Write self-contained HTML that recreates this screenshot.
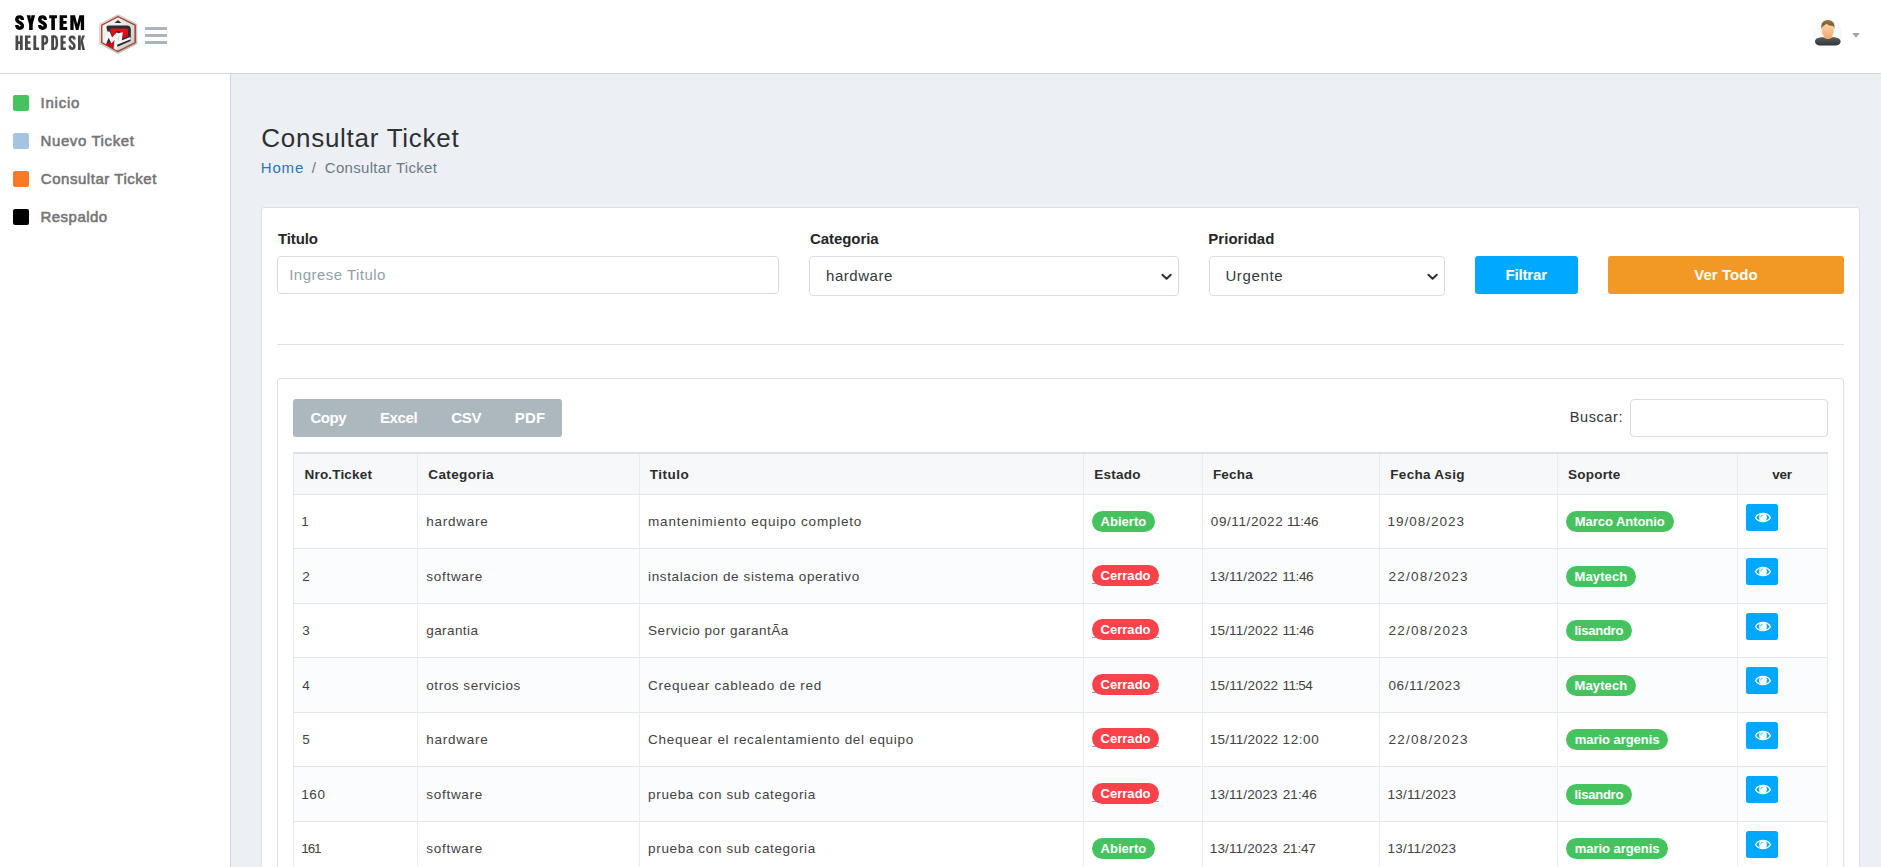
<!DOCTYPE html>
<html lang="es">
<head>
<meta charset="utf-8">
<title>Consultar Ticket</title>
<style>
*{box-sizing:border-box;margin:0;padding:0}
html,body{width:1881px;height:867px;overflow:hidden}
body{font-family:"Liberation Sans",sans-serif;background:#eceff4;color:#343434;font-size:15px;position:relative}
.abs{position:absolute}
.t{position:absolute;white-space:nowrap;line-height:1}
/* header */
#hdr{position:absolute;left:0;top:0;width:1881px;height:74px;background:#fff;border-bottom:1px solid #d0d6db}
/* sidebar */
#side{position:absolute;left:0;top:74px;width:231px;height:793px;background:#fff;border-right:1px solid #d0d6db}
.sq{position:absolute;left:13px;width:16px;height:16px;border-radius:2px}
.mi{position:absolute;left:41px;font-weight:bold;font-size:15px;color:#6f6f6f;white-space:nowrap;line-height:1}
/* main */
#card{position:absolute;left:261px;top:207px;width:1599px;height:700px;background:#fff;border:1px solid #dbe2e7;border-radius:3px}
.lbl{font-weight:bold;font-size:15px;color:#2b2b2b}
.inp{position:absolute;background:#fff;border:1px solid #d5dde2;border-radius:4px}
.btn{position:absolute;border-radius:3px;color:#fff;font-weight:bold;font-size:15px;text-align:center}
#hr{position:absolute;left:277px;top:344px;width:1567px;height:1px;background:#dfe2e5}
#card2{position:absolute;left:277px;top:378px;width:1567px;height:520px;background:#fff;border:1px solid #dde1e4;border-radius:3px}
/* table */
#tbl{position:absolute;left:293px;top:452px;width:1535px;border-collapse:collapse;table-layout:fixed;font-size:15px}
#tbl th,#tbl td{border:1px solid #dde3e7;text-align:left;vertical-align:middle;white-space:nowrap;overflow:hidden}
#tbl th{height:41px;background:#f6f8fa;font-weight:bold;color:#2b2b2b;padding:0 0 0 10px;border-top:2px solid #d8e2e7}
#tbl td{height:54.5px;padding:0 0 0 8px;color:#3c3c3c}
#tbl tr.e td{background:#fbfcfd}
.bd{display:inline-block;height:20px;line-height:20px;border-radius:10px;color:#fff;font-weight:bold;font-size:13px;padding:0 8px;vertical-align:middle}
.g{background:#46c35f}
.r{background:#fa424a}
.eye{position:absolute;width:32px;height:27px;background:#00a8ff;border-radius:2.5px}
.eye svg{position:absolute;left:8.5px;top:8.5px;width:16px;height:10px}
</style>
</head>
<body>
<div id="hdr">
<svg class="abs" style="left:0;top:0" width="200" height="73" viewBox="0 0 200 73">
<defs>
<linearGradient id="lg1" x1="0" y1="0" x2="1" y2="1"><stop offset="0" stop-color="#ffffff"/><stop offset="1" stop-color="#c9c9c9"/></linearGradient>
<linearGradient id="lg2" x1="0" y1="0" x2="0" y2="1"><stop offset="0" stop-color="#f0101c"/><stop offset="1" stop-color="#c00c14"/></linearGradient>
<linearGradient id="lg3" x1="0" y1="0" x2="1" y2="1"><stop offset="0" stop-color="#f4f4f4"/><stop offset="1" stop-color="#b8b8b8"/></linearGradient>
<filter id="bl" x="-20%" y="-20%" width="140%" height="140%"><feGaussianBlur stdDeviation="0.7"/></filter>
<filter id="bl3" x="-20%" y="-20%" width="140%" height="140%"><feGaussianBlur stdDeviation="0.5"/></filter>
<filter id="bl2" x="-20%" y="-20%" width="140%" height="140%"><feGaussianBlur stdDeviation="0.35"/></filter>
</defs>
<g fill="#000" filter="url(#bl2)">
<path d="M22.4 19.9 C22.4 17.8 21.4 16.9 19.6 16.9 C17.8 16.9 16.8 17.9 16.8 19.5 C16.8 22.6 22.4 22.6 22.4 25.8 C22.4 27.4 21.4 28.2 19.6 28.2 C17.8 28.2 16.8 27.3 16.8 25.1" fill="none" stroke="#000" stroke-width="3.4"/>
<path d="M26.7 15.2 H30.4 L30.9 19.5 L31.4 15.2 H35.1 L32.7 24.2 V29.9 H29.1 V24.2 Z"/>
<path d="M45.3 19.9 C45.3 17.8 44.3 16.9 42.5 16.9 C40.7 16.9 39.7 17.9 39.7 19.5 C39.7 22.6 45.3 22.6 45.3 25.8 C45.3 27.4 44.3 28.2 42.5 28.2 C40.7 28.2 39.7 27.3 39.7 25.1" fill="none" stroke="#000" stroke-width="3.4"/>
<path d="M49.2 15.2 H57 V18.3 H54.9 V29.9 H51.3 V18.3 H49.2 Z"/>
<path d="M59.6 15.2 H67 V18.1 H63.3 V21 H66.6 V23.8 H63.3 V27 H67.2 V29.9 H59.6 Z"/>
<path d="M70.3 15.2 H75 L77.2 24 L79.4 15.2 H84.1 V29.9 H80.8 V20.5 L78.5 29.9 H75.9 L73.6 20.5 V29.9 H70.3 Z"/>
</g>
<g fill="#4a4a4c" filter="url(#bl2)">
<path d="M15.5 35.4 H18.3 V41.3 H19.9 V35.4 H22.7 V50 H19.9 V43.9 H18.3 V50 H15.5 Z"/>
<path d="M25 35.4 H30.6 V37.8 H27.8 V41.3 H30.3 V43.7 H27.8 V47.6 H30.8 V50 H25 Z"/>
<path d="M33.4 35.4 H36.2 V47.6 H39.1 V50 H33.4 Z"/>
<path d="M41.4 35.4 H44.2 V50 H41.4 Z"/>
<path d="M43 36.6 H44.8 C46.5 36.6 47 37.6 47 40 C47 42.4 46.5 43.5 44.8 43.5 H43" fill="none" stroke="#4a4a4c" stroke-width="2.5"/>
<path d="M51.2 35.4 H54 V50 H51.2 Z"/>
<path d="M52.8 36.6 H54.5 C56.4 36.6 56.9 38 56.9 42.7 C56.9 47.4 56.4 48.8 54.5 48.8 H52.8" fill="none" stroke="#4a4a4c" stroke-width="2.5"/>
<path d="M60.5 35.4 H65.8 V37.8 H63.3 V41.3 H65.6 V43.7 H63.3 V47.6 H65.9 V50 H60.5 Z"/>
<path d="M74.4 39.6 C74.4 37.6 73.6 36.7 72.1 36.7 C70.6 36.7 69.8 37.6 69.8 39.2 C69.8 42.4 74.4 42.6 74.4 46 C74.4 47.8 73.6 48.7 72.1 48.7 C70.6 48.7 69.8 47.8 69.8 45.6" fill="none" stroke="#4a4a4c" stroke-width="2.6"/>
<path d="M78 35.4 H80.8 V50 H78 Z"/>
<path d="M82.2 35.4 H85 L80.8 45.6 V40 Z"/>
<path d="M80.9 42.6 L82.7 40.2 L85 50 H82.2 Z"/>
</g>
<!-- hex logo -->
<polygon points="118,14.3 137.3,23.9 137.3,43.9 118,53.9 99.3,43.9 99.3,23.9" fill="#bdbdbd" filter="url(#bl)"/>
<polygon points="118,14.9 136.8,24.2 136.8,43.6 118,53.3 99.8,43.6 99.8,24.2" fill="url(#lg3)"/>
<polygon points="118,16.7 135.2,25.2 135.2,42.6 118,51.3 101.7,42.6 101.7,25.2" fill="none" stroke="#ad4836" stroke-width="1.5" filter="url(#bl3)"/>
<polygon points="118,18 134,26 134,41.9 118,49.9 102.9,41.9 102.9,26" fill="url(#lg1)"/>
<path d="M106.4 27.6 Q106.4 25.6 108.6 25.6 H127 Q130.8 25.8 130.8 29.4 V37.8 L121.6 41.2 H110 Z" fill="#2d2d2f"/>
<path d="M110 28.4 H126.4 Q128 28.6 128 30.4 V36.4 L121.6 38.8 H112.6 Z" fill="url(#lg2)"/>
<polygon points="118,20 121.4,22.9 114.6,22.9" fill="#2d2d2f"/>
<polygon points="106,42 114.4,37.6 114.6,49.6 106,44.8" fill="#c80e16"/>
<polygon points="106.2,36.4 108.8,30.6 111.4,42 106.8,43" fill="#2d2d2f"/>
<polygon points="116,31 120,31 119,34.4 115,35.4" fill="#2d2d2f"/>
<path d="M103.8 42 L107.4 31.4 L109.6 31.6 L112.2 37.6 L116.6 32.6 L119.4 33.4 L116.8 50.2 L113.6 48.6 L114.6 40 L111.4 43.2 L108.6 37.8 L106.4 43.6 Z" fill="#f6f6f6"/>
<path d="M119.2 33 L122.8 32.2 L121.8 40.4 L130.2 37 L130.4 39.6 L118.6 44.6 L117.8 43 Z" fill="#f6f6f6"/>
<path d="M117 44.8 L130.6 39.2 L130.6 41 L117.4 46.8 Z" fill="#2d2d2f"/>
<!-- hamburger -->
<rect x="145" y="27" width="22" height="3" fill="#a9b4bc"/>
<rect x="145" y="34" width="22" height="3" fill="#a9b4bc"/>
<rect x="145" y="41" width="22" height="3" fill="#a9b4bc"/>
</svg>
<svg class="abs" style="left:1805px;top:12px" width="64" height="44" viewBox="1805 12 64 44">
<defs>
<linearGradient id="sk" x1="0" y1="0" x2="0" y2="1"><stop offset="0" stop-color="#fdd6a8"/><stop offset="1" stop-color="#f3a96e"/></linearGradient>
<linearGradient id="bd" x1="0" y1="0" x2="0" y2="1"><stop offset="0" stop-color="#5a5c5f"/><stop offset="1" stop-color="#333537"/></linearGradient>
<linearGradient id="hr2" x1="0" y1="0" x2="0" y2="1"><stop offset="0" stop-color="#957442"/><stop offset="1" stop-color="#6f5530"/></linearGradient>
<filter id="ab" x="-20%" y="-20%" width="140%" height="140%"><feGaussianBlur stdDeviation="0.45"/></filter>
</defs>
<circle cx="1827.8" cy="33.8" r="14.6" fill="#f7f9fb"/>
<g filter="url(#ab)">
<rect x="1824.2" y="34" width="7.4" height="6.4" fill="#f2a86c"/>
<path d="M1815 41.4 C1815 38.6 1818 37.3 1823.6 37.2 C1825.4 39.6 1830.4 39.6 1832.2 37.2 C1837.6 37.3 1840.6 38.6 1840.6 41.4 C1840.6 44.2 1837.6 45.6 1834 45.6 H1821.6 C1818 45.6 1815 44.2 1815 41.4 Z" fill="url(#bd)"/>
<ellipse cx="1827.8" cy="30.6" rx="6.1" ry="7.7" fill="url(#sk)"/>
<path d="M1821.6 29 C1820.4 23.6 1823 19.9 1827.8 19.9 C1832.8 19.9 1835.4 23.4 1834.2 29 C1833.8 26.8 1833 25.6 1831.6 25.8 C1829.6 26 1828 25 1826.8 23.8 C1825.4 25 1822.6 25.2 1821.6 29 Z" fill="url(#hr2)"/>
</g>
<polygon points="1852,33 1860,33 1856,37.8" fill="#9fa7af"/>
</svg>
</div>
<div id="side">
  <div class="sq" style="top:21px;background:#46c35f"></div>
  <div class="sq" style="top:59px;background:#a4c4e4"></div>
  <div class="sq" style="top:97px;background:#f97a26"></div>
  <div class="sq" style="top:135px;background:#000"></div>
</div>
<div id="card"></div>
<div class="inp" style="left:277px;top:256px;width:502px;height:38px"></div>
<div class="inp" style="left:809px;top:256px;width:370px;height:40px"></div>
<div class="inp" style="left:1209px;top:256px;width:236px;height:40px"></div>
<div class="btn" style="left:1475px;top:256px;width:103px;height:38px;background:#00a8ff"></div>
<div class="btn" style="left:1608px;top:256px;width:236px;height:38px;background:#f29824"></div>
<div id="hr"></div>
<div id="card2"></div>
<div class="abs" style="left:293px;top:399px;width:269px;height:38px;background:#adb7be;border-radius:3px"></div>
<div class="inp" style="left:1630px;top:399px;width:198px;height:38px"></div>
<div class="abs" style="left:293px;top:452px;width:1535px;height:2px;background:#dde2e6"></div>
<div class="abs" style="left:293px;top:454px;width:1535px;height:40px;background:#f6f8fa"></div>
<div class="abs" style="left:293px;top:549px;width:1535px;height:54px;background:#fbfcfd"></div>
<div class="abs" style="left:293px;top:658px;width:1535px;height:54px;background:#fbfcfd"></div>
<div class="abs" style="left:293px;top:767px;width:1535px;height:54px;background:#fbfcfd"></div>
<div class="abs" style="left:293px;top:494px;width:1535px;height:1px;background:#e1e6e9"></div>
<div class="abs" style="left:293px;top:548px;width:1535px;height:1px;background:#e1e6e9"></div>
<div class="abs" style="left:293px;top:603px;width:1535px;height:1px;background:#e1e6e9"></div>
<div class="abs" style="left:293px;top:657px;width:1535px;height:1px;background:#e1e6e9"></div>
<div class="abs" style="left:293px;top:712px;width:1535px;height:1px;background:#e1e6e9"></div>
<div class="abs" style="left:293px;top:766px;width:1535px;height:1px;background:#e1e6e9"></div>
<div class="abs" style="left:293px;top:821px;width:1535px;height:1px;background:#e1e6e9"></div>
<div class="abs" style="left:293px;top:454px;width:1px;height:420px;background:#e8ecef"></div>
<div class="abs" style="left:417px;top:454px;width:1px;height:420px;background:#e8ecef"></div>
<div class="abs" style="left:639px;top:454px;width:1px;height:420px;background:#e8ecef"></div>
<div class="abs" style="left:1083px;top:454px;width:1px;height:420px;background:#e8ecef"></div>
<div class="abs" style="left:1202px;top:454px;width:1px;height:420px;background:#e8ecef"></div>
<div class="abs" style="left:1379px;top:454px;width:1px;height:420px;background:#e8ecef"></div>
<div class="abs" style="left:1557px;top:454px;width:1px;height:420px;background:#e8ecef"></div>
<div class="abs" style="left:1737px;top:454px;width:1px;height:420px;background:#e8ecef"></div>
<div class="abs" style="left:1827px;top:454px;width:1px;height:420px;background:#e8ecef"></div>
<div class="abs" style="left:1092px;top:511px;width:63px;height:21px;border-radius:10.5px;background:#46c35f"></div>
<div class="abs" style="left:1566px;top:511px;width:108px;height:21px;border-radius:10.5px;background:#46c35f"></div>
<div class="eye" style="left:1746px;top:504px"><svg viewBox="0 0 16 10" style="overflow:visible"><path d="M0.6 4.7 C3.4 -1.0 12.6 -1.0 15.4 4.7 C12.6 9.8 3.4 9.8 0.6 4.7 Z" fill="none" stroke="#fff" stroke-width="1.3"/><circle cx="8" cy="4.5" r="3.9" fill="#fff"/><path d="M5.6 4.4 A2.4 2.4 0 0 1 7.9 2.0" stroke="#27b3ff" stroke-width="0.8" fill="none"/></svg></div>
<div class="abs" style="left:1092px;top:583px;width:67px;height:1px;background:#86a3c4"></div>
<div class="abs" style="left:1092px;top:565px;width:67px;height:21px;border-radius:10.5px;background:#fa424a"></div>
<div class="abs" style="left:1566px;top:566px;width:70px;height:21px;border-radius:10.5px;background:#46c35f"></div>
<div class="eye" style="left:1746px;top:558px"><svg viewBox="0 0 16 10" style="overflow:visible"><path d="M0.6 4.7 C3.4 -1.0 12.6 -1.0 15.4 4.7 C12.6 9.8 3.4 9.8 0.6 4.7 Z" fill="none" stroke="#fff" stroke-width="1.3"/><circle cx="8" cy="4.5" r="3.9" fill="#fff"/><path d="M5.6 4.4 A2.4 2.4 0 0 1 7.9 2.0" stroke="#27b3ff" stroke-width="0.8" fill="none"/></svg></div>
<div class="abs" style="left:1092px;top:637px;width:67px;height:1px;background:#86a3c4"></div>
<div class="abs" style="left:1092px;top:619px;width:67px;height:21px;border-radius:10.5px;background:#fa424a"></div>
<div class="abs" style="left:1566px;top:620px;width:66px;height:21px;border-radius:10.5px;background:#46c35f"></div>
<div class="eye" style="left:1746px;top:613px"><svg viewBox="0 0 16 10" style="overflow:visible"><path d="M0.6 4.7 C3.4 -1.0 12.6 -1.0 15.4 4.7 C12.6 9.8 3.4 9.8 0.6 4.7 Z" fill="none" stroke="#fff" stroke-width="1.3"/><circle cx="8" cy="4.5" r="3.9" fill="#fff"/><path d="M5.6 4.4 A2.4 2.4 0 0 1 7.9 2.0" stroke="#27b3ff" stroke-width="0.8" fill="none"/></svg></div>
<div class="abs" style="left:1092px;top:692px;width:67px;height:1px;background:#86a3c4"></div>
<div class="abs" style="left:1092px;top:674px;width:67px;height:21px;border-radius:10.5px;background:#fa424a"></div>
<div class="abs" style="left:1566px;top:675px;width:70px;height:21px;border-radius:10.5px;background:#46c35f"></div>
<div class="eye" style="left:1746px;top:667px"><svg viewBox="0 0 16 10" style="overflow:visible"><path d="M0.6 4.7 C3.4 -1.0 12.6 -1.0 15.4 4.7 C12.6 9.8 3.4 9.8 0.6 4.7 Z" fill="none" stroke="#fff" stroke-width="1.3"/><circle cx="8" cy="4.5" r="3.9" fill="#fff"/><path d="M5.6 4.4 A2.4 2.4 0 0 1 7.9 2.0" stroke="#27b3ff" stroke-width="0.8" fill="none"/></svg></div>
<div class="abs" style="left:1092px;top:746px;width:67px;height:1px;background:#86a3c4"></div>
<div class="abs" style="left:1092px;top:728px;width:67px;height:21px;border-radius:10.5px;background:#fa424a"></div>
<div class="abs" style="left:1566px;top:729px;width:102px;height:21px;border-radius:10.5px;background:#46c35f"></div>
<div class="eye" style="left:1746px;top:722px"><svg viewBox="0 0 16 10" style="overflow:visible"><path d="M0.6 4.7 C3.4 -1.0 12.6 -1.0 15.4 4.7 C12.6 9.8 3.4 9.8 0.6 4.7 Z" fill="none" stroke="#fff" stroke-width="1.3"/><circle cx="8" cy="4.5" r="3.9" fill="#fff"/><path d="M5.6 4.4 A2.4 2.4 0 0 1 7.9 2.0" stroke="#27b3ff" stroke-width="0.8" fill="none"/></svg></div>
<div class="abs" style="left:1092px;top:801px;width:67px;height:1px;background:#86a3c4"></div>
<div class="abs" style="left:1092px;top:783px;width:67px;height:21px;border-radius:10.5px;background:#fa424a"></div>
<div class="abs" style="left:1566px;top:784px;width:66px;height:21px;border-radius:10.5px;background:#46c35f"></div>
<div class="eye" style="left:1746px;top:776px"><svg viewBox="0 0 16 10" style="overflow:visible"><path d="M0.6 4.7 C3.4 -1.0 12.6 -1.0 15.4 4.7 C12.6 9.8 3.4 9.8 0.6 4.7 Z" fill="none" stroke="#fff" stroke-width="1.3"/><circle cx="8" cy="4.5" r="3.9" fill="#fff"/><path d="M5.6 4.4 A2.4 2.4 0 0 1 7.9 2.0" stroke="#27b3ff" stroke-width="0.8" fill="none"/></svg></div>
<div class="abs" style="left:1092px;top:838px;width:63px;height:21px;border-radius:10.5px;background:#46c35f"></div>
<div class="abs" style="left:1566px;top:838px;width:102px;height:21px;border-radius:10.5px;background:#46c35f"></div>
<div class="eye" style="left:1746px;top:831px"><svg viewBox="0 0 16 10" style="overflow:visible"><path d="M0.6 4.7 C3.4 -1.0 12.6 -1.0 15.4 4.7 C12.6 9.8 3.4 9.8 0.6 4.7 Z" fill="none" stroke="#fff" stroke-width="1.3"/><circle cx="8" cy="4.5" r="3.9" fill="#fff"/><path d="M5.6 4.4 A2.4 2.4 0 0 1 7.9 2.0" stroke="#27b3ff" stroke-width="0.8" fill="none"/></svg></div>
<svg class="abs" style="left:1159px;top:271px" width="16" height="12" viewBox="0 0 16 12"><path d="M3.4 3.7 L7.6 7.7 L11.8 3.7" fill="none" stroke="#2c2f33" stroke-width="2" stroke-linecap="round" stroke-linejoin="round"/></svg>
<svg class="abs" style="left:1425px;top:271px" width="16" height="12" viewBox="0 0 16 12"><path d="M3.4 3.7 L7.6 7.7 L11.8 3.7" fill="none" stroke="#2c2f33" stroke-width="2" stroke-linecap="round" stroke-linejoin="round"/></svg>

<div class="t" style="left:40.50px;top:95.30px;font-size:15px;color:#747474;letter-spacing:0.785px;-webkit-text-stroke:0.55px #747474">Inicio</div>
<div class="t" style="left:40.50px;top:133.30px;font-size:15px;color:#747474;letter-spacing:0.608px;-webkit-text-stroke:0.55px #747474">Nuevo Ticket</div>
<div class="t" style="left:40.80px;top:171.30px;font-size:15px;color:#747474;letter-spacing:0.537px;-webkit-text-stroke:0.55px #747474">Consultar Ticket</div>
<div class="t" style="left:40.50px;top:209.30px;font-size:15px;color:#747474;letter-spacing:0.467px;-webkit-text-stroke:0.55px #747474">Respaldo</div>
<div class="t" style="left:261.30px;top:124.99px;font-size:26px;color:#2f3033;letter-spacing:0.730px">Consultar Ticket</div>
<div class="t" style="left:260.70px;top:160.30px;font-size:15px;color:#2a78b2;letter-spacing:0.877px">Home</div>
<div class="t" style="left:311.70px;top:160.30px;font-size:15px;color:#6c7a86">/</div>
<div class="t" style="left:324.80px;top:160.30px;font-size:15px;color:#6c7a86;letter-spacing:0.304px">Consultar Ticket</div>
<div class="t" style="left:278.00px;top:231.30px;font-size:15px;color:#262626;font-weight:bold;letter-spacing:-0.117px">Titulo</div>
<div class="t" style="left:810.00px;top:231.30px;font-size:15px;color:#262626;font-weight:bold;letter-spacing:-0.068px">Categoria</div>
<div class="t" style="left:1208.30px;top:231.30px;font-size:15px;color:#262626;font-weight:bold;letter-spacing:0.027px">Prioridad</div>
<div class="t" style="left:289.20px;top:267.30px;font-size:15px;color:#919fa9;letter-spacing:0.478px">Ingrese Titulo</div>
<div class="t" style="left:826.00px;top:268.30px;font-size:15px;color:#343a40;letter-spacing:0.544px">hardware</div>
<div class="t" style="left:1225.40px;top:268.30px;font-size:15px;color:#343a40;letter-spacing:0.630px">Urgente</div>
<div class="t" style="left:1505.40px;top:267.30px;font-size:15px;color:#fff;font-weight:bold;letter-spacing:-0.145px">Filtrar</div>
<div class="t" style="left:1694.20px;top:267.30px;font-size:15px;color:#fff;font-weight:bold;letter-spacing:0.057px">Ver Todo</div>
<div class="t" style="left:310.50px;top:410.30px;font-size:15px;color:#fff;font-weight:bold;letter-spacing:-0.486px">Copy</div>
<div class="t" style="left:380.00px;top:410.30px;font-size:15px;color:#fff;font-weight:bold;letter-spacing:-0.408px">Excel</div>
<div class="t" style="left:451.20px;top:410.30px;font-size:15px;color:#fff;font-weight:bold;letter-spacing:-0.269px">CSV</div>
<div class="t" style="left:514.80px;top:410.30px;font-size:15px;color:#fff;font-weight:bold;letter-spacing:0.181px">PDF</div>
<div class="t" style="left:1569.80px;top:409.73px;font-size:14.5px;color:#343434;letter-spacing:0.579px">Buscar:</div>
<div class="t" style="left:304.60px;top:467.57px;font-size:13.5px;color:#2c2c2c;font-weight:bold;letter-spacing:0.169px">Nro.Ticket</div>
<div class="t" style="left:428.30px;top:467.57px;font-size:13.5px;color:#2c2c2c;font-weight:bold;letter-spacing:0.368px">Categoria</div>
<div class="t" style="left:649.80px;top:467.57px;font-size:13.5px;color:#2c2c2c;font-weight:bold;letter-spacing:0.491px">Titulo</div>
<div class="t" style="left:1094.20px;top:467.57px;font-size:13.5px;color:#2c2c2c;font-weight:bold;letter-spacing:0.248px">Estado</div>
<div class="t" style="left:1212.90px;top:467.57px;font-size:13.5px;color:#2c2c2c;font-weight:bold;letter-spacing:0.223px">Fecha</div>
<div class="t" style="left:1390.30px;top:467.57px;font-size:13.5px;color:#2c2c2c;font-weight:bold;letter-spacing:0.292px">Fecha Asig</div>
<div class="t" style="left:1568.10px;top:467.57px;font-size:13.5px;color:#2c2c2c;font-weight:bold;letter-spacing:0.201px">Soporte</div>
<div class="t" style="left:1772.20px;top:467.57px;font-size:13.5px;color:#2c2c2c;font-weight:bold;letter-spacing:-0.258px">ver</div>
<div class="t" style="left:301.30px;top:514.57px;font-size:13.5px;color:#424242">1</div>
<div class="t" style="left:426.30px;top:514.57px;font-size:13.5px;color:#424242;letter-spacing:0.747px">hardware</div>
<div class="t" style="left:648.10px;top:514.57px;font-size:13.5px;color:#424242;letter-spacing:0.780px">mantenimiento equipo completo</div>
<div class="t" style="left:1210.80px;top:514.57px;font-size:13.5px;color:#424242;letter-spacing:0.594px">09/11/2022</div>
<div class="t" style="left:1286.90px;top:514.57px;font-size:13.5px;color:#424242;letter-spacing:-0.293px">11:46</div>
<div class="t" style="left:1387.50px;top:514.57px;font-size:13.5px;color:#424242;letter-spacing:1.005px">19/08/2023</div>
<div class="t" style="left:1100.50px;top:515.00px;font-size:13px;color:#fff;font-weight:bold;letter-spacing:0.040px">Abierto</div>
<div class="t" style="left:1574.80px;top:515.00px;font-size:13px;color:#fff;font-weight:bold;letter-spacing:-0.046px">Marco Antonio</div>
<div class="t" style="left:302.30px;top:569.57px;font-size:13.5px;color:#424242">2</div>
<div class="t" style="left:426.30px;top:569.57px;font-size:13.5px;color:#424242;letter-spacing:0.713px">software</div>
<div class="t" style="left:648.10px;top:569.57px;font-size:13.5px;color:#424242;letter-spacing:0.613px">instalacion de sistema operativo</div>
<div class="t" style="left:1209.80px;top:569.57px;font-size:13.5px;color:#424242;letter-spacing:0.138px">13/11/2022</div>
<div class="t" style="left:1282.20px;top:569.57px;font-size:13.5px;color:#424242;letter-spacing:-0.343px">11:46</div>
<div class="t" style="left:1388.50px;top:569.57px;font-size:13.5px;color:#424242;letter-spacing:1.271px">22/08/2023</div>
<div class="t" style="left:1100.50px;top:569.00px;font-size:13px;color:#fff;font-weight:bold;letter-spacing:0.032px">Cerrado</div>
<div class="t" style="left:1574.50px;top:570.00px;font-size:13px;color:#fff;font-weight:bold;letter-spacing:0.120px">Maytech</div>
<div class="t" style="left:302.30px;top:623.57px;font-size:13.5px;color:#424242">3</div>
<div class="t" style="left:426.30px;top:623.57px;font-size:13.5px;color:#424242;letter-spacing:0.403px">garantia</div>
<div class="t" style="left:648.10px;top:623.57px;font-size:13.5px;color:#424242;letter-spacing:0.523px">Servicio por garantÃ­a</div>
<div class="t" style="left:1209.80px;top:623.57px;font-size:13.5px;color:#424242;letter-spacing:0.183px">15/11/2022</div>
<div class="t" style="left:1282.50px;top:623.57px;font-size:13.5px;color:#424242;letter-spacing:-0.343px">11:46</div>
<div class="t" style="left:1388.50px;top:623.57px;font-size:13.5px;color:#424242;letter-spacing:1.271px">22/08/2023</div>
<div class="t" style="left:1100.50px;top:623.00px;font-size:13px;color:#fff;font-weight:bold;letter-spacing:0.032px">Cerrado</div>
<div class="t" style="left:1574.50px;top:624.00px;font-size:13px;color:#fff;font-weight:bold;letter-spacing:-0.246px">lisandro</div>
<div class="t" style="left:302.30px;top:678.57px;font-size:13.5px;color:#424242">4</div>
<div class="t" style="left:426.30px;top:678.57px;font-size:13.5px;color:#424242;letter-spacing:0.548px">otros servicios</div>
<div class="t" style="left:648.10px;top:678.57px;font-size:13.5px;color:#424242;letter-spacing:0.711px">Crequear cableado de red</div>
<div class="t" style="left:1209.80px;top:678.57px;font-size:13.5px;color:#424242;letter-spacing:0.194px">15/11/2022</div>
<div class="t" style="left:1282.60px;top:678.57px;font-size:13.5px;color:#424242;letter-spacing:-0.668px">11:54</div>
<div class="t" style="left:1388.50px;top:678.57px;font-size:13.5px;color:#424242;letter-spacing:0.572px">06/11/2023</div>
<div class="t" style="left:1100.50px;top:678.00px;font-size:13px;color:#fff;font-weight:bold;letter-spacing:0.032px">Cerrado</div>
<div class="t" style="left:1574.50px;top:679.00px;font-size:13px;color:#fff;font-weight:bold;letter-spacing:0.120px">Maytech</div>
<div class="t" style="left:302.30px;top:732.57px;font-size:13.5px;color:#424242">5</div>
<div class="t" style="left:426.30px;top:732.57px;font-size:13.5px;color:#424242;letter-spacing:0.747px">hardware</div>
<div class="t" style="left:648.10px;top:732.57px;font-size:13.5px;color:#424242;letter-spacing:0.694px">Chequear el recalentamiento del equipo</div>
<div class="t" style="left:1209.80px;top:732.57px;font-size:13.5px;color:#424242;letter-spacing:0.194px">15/11/2022</div>
<div class="t" style="left:1282.60px;top:732.57px;font-size:13.5px;color:#424242;letter-spacing:0.581px">12:00</div>
<div class="t" style="left:1388.50px;top:732.57px;font-size:13.5px;color:#424242;letter-spacing:1.260px">22/08/2023</div>
<div class="t" style="left:1100.50px;top:732.00px;font-size:13px;color:#fff;font-weight:bold;letter-spacing:0.032px">Cerrado</div>
<div class="t" style="left:1574.80px;top:733.00px;font-size:13px;color:#fff;font-weight:bold;letter-spacing:-0.052px">mario argenis</div>
<div class="t" style="left:301.30px;top:787.57px;font-size:13.5px;color:#424242;letter-spacing:0.542px">160</div>
<div class="t" style="left:426.30px;top:787.57px;font-size:13.5px;color:#424242;letter-spacing:0.713px">software</div>
<div class="t" style="left:648.10px;top:787.57px;font-size:13.5px;color:#424242;letter-spacing:0.641px">prueba con sub categoria</div>
<div class="t" style="left:1209.80px;top:787.57px;font-size:13.5px;color:#424242;letter-spacing:0.138px">13/11/2023</div>
<div class="t" style="left:1282.80px;top:787.57px;font-size:13.5px;color:#424242;letter-spacing:0.056px">21:46</div>
<div class="t" style="left:1387.50px;top:787.57px;font-size:13.5px;color:#424242;letter-spacing:0.205px">13/11/2023</div>
<div class="t" style="left:1100.50px;top:787.00px;font-size:13px;color:#fff;font-weight:bold;letter-spacing:0.032px">Cerrado</div>
<div class="t" style="left:1574.50px;top:788.00px;font-size:13px;color:#fff;font-weight:bold;letter-spacing:-0.246px">lisandro</div>
<div class="t" style="left:301.30px;top:841.57px;font-size:13.5px;color:#424242;letter-spacing:-1.158px">161</div>
<div class="t" style="left:426.30px;top:841.57px;font-size:13.5px;color:#424242;letter-spacing:0.713px">software</div>
<div class="t" style="left:648.10px;top:841.57px;font-size:13.5px;color:#424242;letter-spacing:0.641px">prueba con sub categoria</div>
<div class="t" style="left:1209.80px;top:841.57px;font-size:13.5px;color:#424242;letter-spacing:0.138px">13/11/2023</div>
<div class="t" style="left:1282.80px;top:841.57px;font-size:13.5px;color:#424242;letter-spacing:-0.194px">21:47</div>
<div class="t" style="left:1387.50px;top:841.57px;font-size:13.5px;color:#424242;letter-spacing:0.205px">13/11/2023</div>
<div class="t" style="left:1100.50px;top:842.00px;font-size:13px;color:#fff;font-weight:bold;letter-spacing:0.040px">Abierto</div>
<div class="t" style="left:1574.80px;top:842.00px;font-size:13px;color:#fff;font-weight:bold;letter-spacing:-0.052px">mario argenis</div>
</body>
</html>
